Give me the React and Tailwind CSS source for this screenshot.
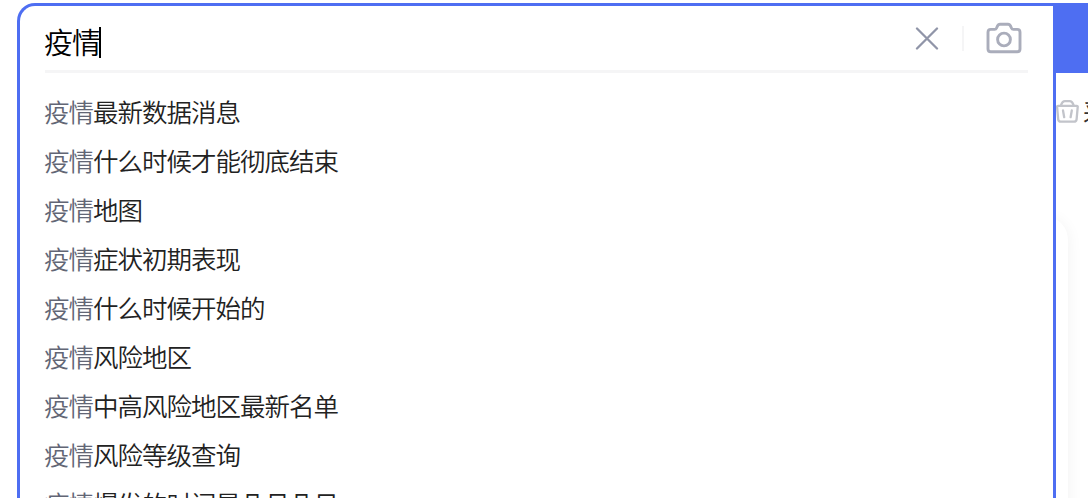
import React from "react";

const keyword = "疫情";

const suggestions = [
  "最新数据消息",
  "什么时候才能彻底结束",
  "地图",
  "症状初期表现",
  "什么时候开始的",
  "风险地区",
  "中高风险地区最新名单",
  "风险等级查询",
  "爆发的时间是几月几日",
];

const CloseIcon = () => (
  <svg className="w-6 h-6" viewBox="0 0 24 24" fill="none" stroke="#9095a8" strokeWidth="2.3" strokeLinecap="round">
    <path d="M2 2.5L22 22.5M22 2.5L2 22.5" />
  </svg>
);

const CameraIcon = () => (
  <svg className="w-9 h-8" viewBox="0 0 36 32" fill="none" stroke="#aaadbb" strokeWidth="2.9" strokeLinejoin="round">
    <path d="M4.8 7.4H8.6C9.6 7.4 10.2 6.9 10.6 6L11.4 4.2C11.9 2.9 12.7 2.2 14 2.2H22C23.3 2.2 24.1 2.9 24.6 4.2L25.4 6C25.8 6.9 26.4 7.4 27.4 7.4H31.2C33 7.4 34 8.4 34 10.2V27C34 28.8 33 29.8 31.2 29.8H4.8C3 29.8 2 28.8 2 27V10.2C2 8.4 3 7.4 4.8 7.4Z" />
    <circle cx="18" cy="17.5" r="6.4" />
  </svg>
);

const BasketIcon = () => (
  <svg className="w-[23px] h-[23px] shrink-0" viewBox="0 0 23 23" fill="none" stroke="#c2c4ca" strokeWidth="2.3" strokeLinecap="round" strokeLinejoin="round">
    <path d="M4.8 5.8C5.8 2.6 7 1.2 9 1.2H13.6C15.6 1.2 16.8 2.6 17.8 5.8" />
    <path d="M2.2 5.8H20.6C21.5 5.8 21.9 6.3 21.7 7.2L20.6 19.3C20.4 21 19.6 21.7 17.9 21.7H4.9C3.2 21.7 2.4 21 2.2 19.3L1.1 7.2C0.9 6.3 1.3 5.8 2.2 5.8Z" />
    <path d="M7 10.5L8.2 17.2M15.8 10.5L14.6 17.2" />
  </svg>
);

const SearchBox = () => (
  <div className="w-[1039px] shrink-0 border-[3px] border-b-0 border-[#4e6ef2] rounded-tl-[18px] bg-white pl-6 pr-[25px]">
    <div className="flex items-center h-[67px] ml-px border-b-[3px] border-[#f5f5f6]">
      <div className="flex items-center grow h-full pt-[9px] -ml-px text-[29px] tracking-[-1px] leading-[36px] font-[350] text-black">
        <span className="-mt-[3px]">{keyword}</span>
        <span className="w-0.5 h-[31px] -ml-px bg-black" />
      </div>
      <CloseIcon />
      <span className="w-0.5 h-[25px] ml-[23px] mr-[22px] bg-[#f5f5f6]" />
      <CameraIcon />
      <span className="w-[6px]" />
    </div>
    <ul className="pt-[14px] text-[25.5px] tracking-[-1px]">
      {suggestions.map((item) => (
        <li key={item} className="h-[49px] leading-[47px] whitespace-nowrap font-[350] text-[#222222]">
          <span className="text-[#626675]">{keyword}</span>
          {item}
        </li>
      ))}
    </ul>
  </div>
);

const App = () => {
  return (
    <div
      lang="zh-CN"
      className="flex w-[1088px] h-[498px] overflow-hidden bg-white pl-[17px] pt-[3px] font-['Noto_Sans_CJK_SC',sans-serif]"
    >
      <SearchBox />
      <div className="flex flex-col w-8 shrink-0">
        <div className="h-[70px] shrink-0 bg-[#4e6ef2]" />
        <div className="flex items-center gap-1 h-[77px] shrink-0 text-[24px] whitespace-nowrap text-[#333333]">
          <BasketIcon />
          <span className="-mt-0.5">采购</span>
        </div>
        {/* Only the right edge of the card shows beside the search box */}
        <div className="overflow-hidden grow pt-[66px]">
          <div className="w-12 h-[400px] -ml-9 rounded-tr-[24px] bg-white shadow-[0_2px_16px_rgba(0,0,0,0.06)]" />
        </div>
      </div>
    </div>
  );
};

export default App;
